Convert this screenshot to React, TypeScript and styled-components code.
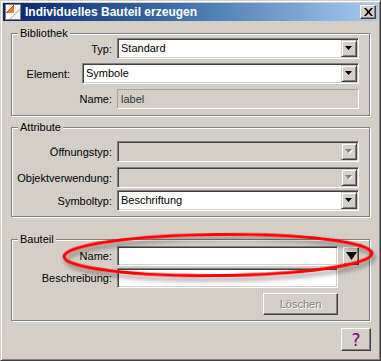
import styled, { createGlobalStyle } from 'styled-components';

const GlobalStyle = createGlobalStyle`
	html, body {
		margin: 0;
		padding: 0;
		background: #d4d0c8;
	}
	body {
		font-family: 'Liberation Sans', Arial, sans-serif;
		font-size: 11px;
		color: #000;
	}
`;

function ComboArrow({ disabled }: { disabled?: boolean }) {
	return (
		<DropButton>
			<svg width="8" height="5" viewBox="0 0 8 5">
				{disabled && <polygon points="1,1 8,1 4.5,5" fill="#fff" />}
				<polygon points="0,0 7,0 3.5,4" fill={disabled ? '#808080' : '#000'} />
			</svg>
		</DropButton>
	);
}

function Combo({ value, disabled }: { value?: string; disabled?: boolean }) {
	return (
		<ComboBox $disabled={disabled}>
			<ComboText>{value}</ComboText>
			<ComboArrow disabled={disabled} />
		</ComboBox>
	);
}

function App() {
	return (
		<>
			<GlobalStyle />
			<Window>
				<TitleBar>
					<svg width="16" height="16" viewBox="0 0 16 16">
						<rect x="1" y="1" width="14" height="14" fill="#fff" />
						<polygon points="1,9 9,1 9,9" fill="#f47a2a" />
						<polyline points="1,9 9,1" stroke="#c0401a" strokeWidth="1" fill="none" />
						<polygon points="4,15 15,4 15,15" fill="#c8c8c8" />
						<polygon points="6,15 15,6 15,15" fill="#f4f4f4" />
						<rect x="0.5" y="0.5" width="15" height="15" fill="none" stroke="#808080" strokeWidth="1" />
					</svg>
					<Title>Individuelles Bauteil erzeugen</Title>
					<CloseButton>
						<svg width="9" height="8" viewBox="0 0 9 8">
							<path d="M0 0 L2 0 L4.5 2.8 L7 0 L9 0 L5.6 4 L9 8 L7 8 L4.5 5.2 L2 8 L0 8 L3.4 4 Z" fill="#000" />
						</svg>
					</CloseButton>
				</TitleBar>

				<Body>
					<Group $pt={4} $pb={6}>
						<Legend>Bibliothek</Legend>
						<Row>
							<Label>Typ:</Label>
							<Combo value="Standard" />
						</Row>
						<Row $mt={4} $gap={12}>
							<Label $w={58}>Element:</Label>
							<Combo value="Symbole" />
						</Row>
						<Row $mt={5}>
							<Label>Name:</Label>
							<ReadOnlyField>label</ReadOnlyField>
						</Row>
					</Group>

					<Group $mt={11} $pt={13} $pb={5}>
						<Legend>Attribute</Legend>
						<Row>
							<Label>Öffnungstyp:</Label>
							<Combo disabled />
						</Row>
						<Row $mt={5}>
							<Label>Objektverwendung:</Label>
							<Combo disabled />
						</Row>
						<Row $mt={2}>
							<Label>Symboltyp:</Label>
							<Combo value="Beschriftung" />
						</Row>
					</Group>

					<Group $mt={22} $pt={6} $pb={5}>
						<Legend>Bauteil</Legend>
						<Row>
							<Label>Name:</Label>
							<TextInput />
							<ArrowButton>
								<svg width="11" height="8" viewBox="0 0 11 8">
									<polygon points="0,0 11,0 5.5,8" fill="#000" />
								</svg>
							</ArrowButton>
						</Row>
						<Row $mt={2}>
							<Label>Beschreibung:</Label>
							<TextInput $fixed />
						</Row>
						<ButtonRow>
							<PushButton $w={75} $h={22} disabled>
								Löschen
							</PushButton>
						</ButtonRow>
					</Group>

					<Footer>
						<HelpButton>?</HelpButton>
					</Footer>
				</Body>

				<Highlight width="320" height="56" viewBox="0 0 320 56">
					<defs>
						<filter id="shade" x="-10%" y="-40%" width="120%" height="200%">
							<feDropShadow dx="2" dy="4" stdDeviation="2.2" floodColor="#000" floodOpacity="0.4" />
						</filter>
					</defs>
					<ellipse
						cx="158"
						cy="25"
						rx="154"
						ry="20.5"
						fill="none"
						stroke="#f00"
						strokeWidth="3"
						transform="rotate(-0.6 158 25)"
						filter="url(#shade)"
					/>
				</Highlight>
			</Window>
		</>
	);
}

const Window = styled.div`
	position: relative;
	box-sizing: border-box;
	display: flex;
	flex-direction: column;
	width: 381px;
	height: 361px;
	padding: 2px;
	border: 1px solid;
	border-color: #d4d0c8 #404040 #404040 #d4d0c8;
	box-shadow: inset 1px 1px #fff, inset -1px -1px #808080;
	background: repeating-linear-gradient(90deg, #d6d2ca 0 1px, #d0ccc4 1px 2px);
	overflow: hidden;
`;

const TitleBar = styled.div`
	display: flex;
	align-items: center;
	gap: 4px;
	height: 18px;
	padding: 0 2px 0 2px;
	background: linear-gradient(90deg, #0a246a 0%, #3a6ea5 45%, #a6caf0 100%);
`;

const Title = styled.span`
	flex: 1;
	color: #fff;
	font-size: 12px;
	font-weight: bold;
	white-space: nowrap;
`;

const CloseButton = styled.div`
	display: flex;
	align-items: center;
	justify-content: center;
	box-sizing: border-box;
	width: 16px;
	height: 14px;
	border: 1px solid;
	border-color: #fff #404040 #404040 #fff;
	box-shadow: inset -1px -1px #808080;
	background: #d4d0c8;
`;

const Body = styled.div`
	display: flex;
	flex-direction: column;
	padding: 12px 8px 0 8px;
`;

const Group = styled.section<{ $mt?: number; $pt: number; $pb: number }>`
	position: relative;
	display: flex;
	flex-direction: column;
	margin-top: ${({ $mt }) => $mt ?? 0}px;
	padding: ${({ $pt }) => $pt}px 10px ${({ $pb }) => $pb}px 0;
	border: 1px solid #808080;
	box-shadow: inset 1px 1px #fff, 1px 1px #fff;
`;

const Legend = styled.span`
	position: absolute;
	top: -7px;
	left: 6px;
	padding: 0 2px;
	line-height: 13px;
	background: #d4d0c8;
`;

const Row = styled.div<{ $mt?: number; $gap?: number }>`
	display: flex;
	align-items: center;
	gap: ${({ $gap }) => $gap ?? 5}px;
	margin-top: ${({ $mt }) => $mt ?? 0}px;
`;

const Label = styled.span<{ $w?: number }>`
	flex: 0 0 ${({ $w }) => $w ?? 100}px;
	text-align: right;
	white-space: nowrap;
`;

const ComboBox = styled.div<{ $disabled?: boolean }>`
	display: flex;
	flex: 1;
	box-sizing: border-box;
	height: 21px;
	padding: 1px;
	border: 1px solid;
	border-color: #808080 #fff #fff #808080;
	box-shadow: inset 1px 1px #404040, inset -1px -1px #d4d0c8;
	background: ${({ $disabled }) => ($disabled ? 'transparent' : '#fff')};
`;

const ComboText = styled.span`
	flex: 1;
	padding-left: 2px;
	line-height: 17px;
`;

const DropButton = styled.div`
	display: flex;
	align-items: center;
	justify-content: center;
	box-sizing: border-box;
	width: 16px;
	border: 1px solid;
	border-color: #d4d0c8 #404040 #404040 #d4d0c8;
	box-shadow: inset 1px 1px #fff, inset -1px -1px #808080;
	background: #d4d0c8;
`;

const ReadOnlyField = styled.div`
	flex: 1;
	box-sizing: border-box;
	height: 20px;
	padding-left: 3px;
	border: 1px solid;
	border-color: #a8a49c #fff #fff #a8a49c;
	color: #333;
	line-height: 18px;
`;

const TextInput = styled.div<{ $fixed?: boolean }>`
	flex: ${({ $fixed }) => ($fixed ? '0 0 221px' : '1')};
	box-sizing: border-box;
	height: 20px;
	border: 1px solid;
	border-color: #808080 #fff #fff #808080;
	box-shadow: inset 1px 1px #404040, inset -1px -1px #d4d0c8;
	background: #fff;
`;

const ArrowButton = styled.div`
	display: flex;
	align-items: center;
	justify-content: center;
	box-sizing: border-box;
	flex: 0 0 16px;
	height: 18px;
	border: 1px solid;
	border-color: #fff #404040 #404040 #fff;
	box-shadow: inset -1px -1px #808080;
	background: #d4d0c8;
`;

const ButtonRow = styled.div`
	display: flex;
	justify-content: flex-end;
	margin-top: 5px;
	padding-right: 21px;
`;

const PushButton = styled.button<{ $w: number; $h: number }>`
	box-sizing: border-box;
	width: ${({ $w }) => $w}px;
	height: ${({ $h }) => $h}px;
	padding: 0;
	border: 1px solid;
	border-color: #fff #404040 #404040 #fff;
	box-shadow: inset -1px -1px #808080;
	background: #d4d0c8;
	font-family: 'Liberation Sans', Arial, sans-serif;
	font-size: 11px;
	color: #000;

	&:disabled {
		color: #808080;
		text-shadow: 1px 1px #fff;
	}
`;

const Footer = styled.div`
	display: flex;
	justify-content: flex-end;
	margin: 7px -1px 0 0;
`;

const HelpButton = styled.div`
	display: flex;
	align-items: center;
	justify-content: center;
	box-sizing: border-box;
	width: 30px;
	height: 23px;
	padding-top: 1px;
	border: 1px solid;
	border-color: #fff #404040 #404040 #fff;
	box-shadow: inset -1px -1px #808080;
	background: #d4d0c8;
	color: #800080;
	font-family: 'DejaVu Sans', sans-serif;
	font-size: 17px;
	font-weight: normal;
`;

const Highlight = styled.svg`
	position: absolute;
	top: 229px;
	left: 59px;
	overflow: visible;
	pointer-events: none;
`;

export default App;
